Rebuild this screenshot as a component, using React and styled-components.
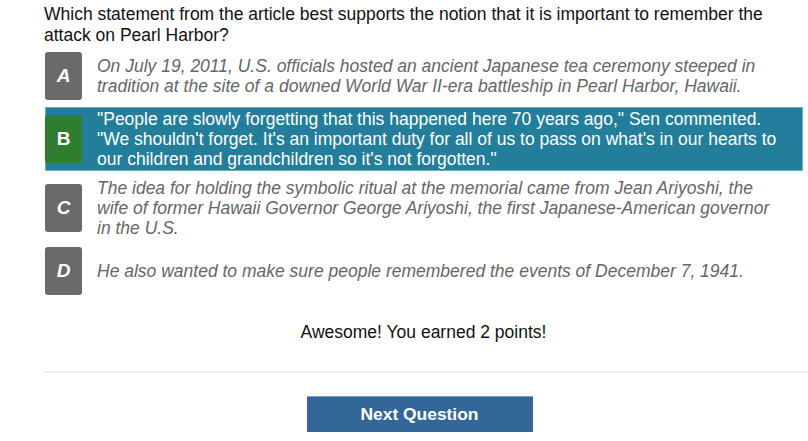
import styled, { createGlobalStyle } from 'styled-components';

const GlobalStyle = createGlobalStyle`
  html, body {
    margin: 0;
    padding: 0;
    background: #ffffff;
    overflow: hidden;
  }
  body {
    font-family: "Liberation Sans", Arial, sans-serif;
    color: #111111;
  }
`;

const Page = styled.div`
  width: 808px;
  height: 441px;
  padding: 4px 0 0 44px;
  box-sizing: border-box;
`;

const Content = styled.div`
  margin-right: 5px;
`;

const Question = styled.p`
  margin: 0 0 4px 0;
  font-size: 17.5px;
  line-height: 21px;
  color: #111111;
`;

const Options = styled.div`
  display: flex;
  flex-direction: column;
  gap: 5px;
  margin-left: 1px;
`;

const Row = styled.div`
  display: flex;
  align-items: center;
  min-height: 50px;
  box-sizing: border-box;
  padding: 2px 20px 2px 0;
  background: ${({ selected }) => (selected ? '#237e9b' : 'transparent')};
  box-shadow: ${({ selected }) => (selected ? 'inset 0 0 0 1px #6aaec3' : 'none')};
`;

const Badge = styled.div`
  flex: 0 0 37px;
  height: 48px;
  margin-right: 15px;
  border-radius: 3px;
  display: flex;
  align-items: center;
  justify-content: center;
  background: ${({ correct }) => (correct ? '#2e7d31' : '#6a6a6a')};
  color: #ffffff;
  font-size: 19px;
  font-weight: bold;
  font-style: ${({ correct }) => (correct ? 'normal' : 'italic')};
`;

const OptionText = styled.div`
  flex: 1;
  font-size: 17.5px;
  line-height: 20px;
  font-style: ${({ selected }) => (selected ? 'normal' : 'italic')};
  color: ${({ selected }) => (selected ? '#ffffff' : '#666666')};
`;

const Feedback = styled.p`
  margin: 25px 0 0 0;
  text-align: center;
  font-size: 17.5px;
  line-height: 21px;
  color: #111111;
`;

const Divider = styled.hr`
  margin: 28px 0 0 0;
  border: 0;
  border-top: 2px solid #ececec;
`;

const Footer = styled.div`
  display: flex;
  justify-content: center;
  padding: 23px 13px 0 0;
`;

const NextButton = styled.button`
  width: 226px;
  height: 36px;
  border: 0;
  border-top: 1px solid #7f9fc0;
  background: #336699;
  color: #ffffff;
  font-family: "Liberation Sans", Arial, sans-serif;
  font-size: 17.4px;
  font-weight: bold;
  cursor: pointer;
`;

const options = [
  {
    letter: 'A',
    text: 'On July 19, 2011, U.S. officials hosted an ancient Japanese tea ceremony steeped in tradition at the site of a downed World War II-era battleship in Pearl Harbor, Hawaii.',
  },
  {
    letter: 'B',
    selected: true,
    text: '"People are slowly forgetting that this happened here 70 years ago," Sen commented. "We shouldn\'t forget. It\'s an important duty for all of us to pass on what\'s in our hearts to our children and grandchildren so it\'s not forgotten."',
  },
  {
    letter: 'C',
    text: 'The idea for holding the symbolic ritual at the memorial came from Jean Ariyoshi, the wife of former Hawaii Governor George Ariyoshi, the first Japanese-American governor in the U.S.',
  },
  {
    letter: 'D',
    text: 'He also wanted to make sure people remembered the events of December 7, 1941.',
  },
];

const App = () => {
  return (
    <>
      <GlobalStyle />
      <Page>
        <Content>
          <Question>
            Which statement from the article best supports the notion that it is important to remember the attack on Pearl Harbor?
          </Question>
          <Options>
            {options.map((o) => (
              <Row key={o.letter} selected={o.selected}>
                <Badge correct={o.selected}>{o.letter}</Badge>
                <OptionText selected={o.selected}>{o.text}</OptionText>
              </Row>
            ))}
          </Options>
          <Feedback>Awesome! You earned 2 points!</Feedback>
        </Content>
        <Divider />
        <Footer>
          <NextButton>Next Question</NextButton>
        </Footer>
      </Page>
    </>
  );
};

export default App;
